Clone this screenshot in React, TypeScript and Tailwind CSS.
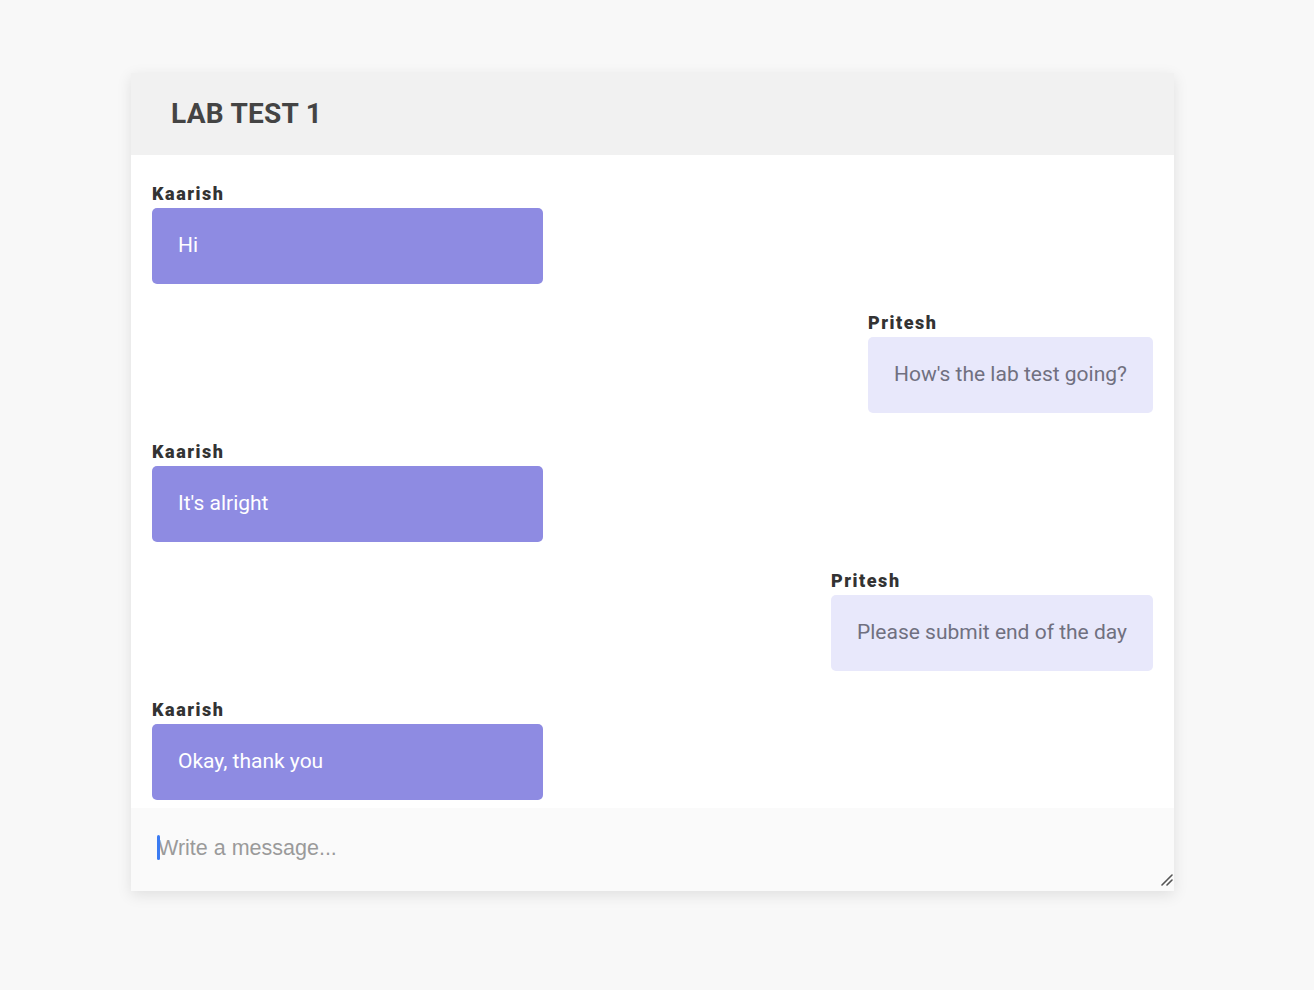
type Message = {
  author: string;
  text: string;
  mine: boolean;
};

const messages: Message[] = [
  { author: "Kaarish", text: "Hi", mine: true },
  { author: "Pritesh", text: "How's the lab test going?", mine: false },
  { author: "Kaarish", text: "It's alright", mine: true },
  { author: "Pritesh", text: "Please submit end of the day", mine: false },
  { author: "Kaarish", text: "Okay, thank you", mine: true }
];

function ChatBubble({ author, text, mine }: Message) {
  return (
    <div className={mine ? "flex justify-start" : "flex justify-end"}>
      <div className="flex flex-col items-start">
        <p className="mb-1 text-[18px] font-black leading-5 tracking-[0.085em] text-[#333]">{author}</p>
        <div
          className={
            mine
              ? "flex h-[76px] w-[391px] items-center rounded-[5px] bg-[#8e8be2] px-[26px] text-[21px] text-white"
              : "flex h-[76px] items-center rounded-[5px] bg-[#e8e8fb] px-[26px] text-[21px] text-[#707080]"
          }
        >
          {text}
        </div>
      </div>
    </div>
  );
}

export default function App() {
  return (
    <div className="min-h-[990px] bg-[#f8f8f8] pt-[73px] font-['Roboto',sans-serif]">
      <div className="ml-[131px] w-[1043px] bg-white shadow-[0_4px_14px_rgba(0,0,0,0.10)]">
        <header className="flex h-[82px] items-center bg-[#f1f1f1] px-10">
          <h1 className="text-[28px] font-bold tracking-[0.01em] text-[#444]">LAB TEST 1</h1>
        </header>

        <div className="flex h-[653px] flex-col gap-[29px] overflow-hidden px-[21px] pt-[29px]">
          {messages.map((m, i) => (
            <ChatBubble key={i} {...m} />
          ))}
        </div>

        <div className="relative h-[83px] bg-[#fafafa]">
          <span className="absolute left-[26px] top-[27px] h-[25px] w-[3px] rounded-sm bg-[#3b7bf2]" />
          <textarea
            placeholder="Write a message..."
            className="block h-full w-full resize-none bg-transparent px-[27px] pt-[28px] font-['Liberation_Sans',sans-serif] text-[21.5px] leading-6 text-[#333] outline-none placeholder:text-[#9a9a9a]"
          />
          <svg className="absolute bottom-[5px] right-[1px] h-[12px] w-[12px]" viewBox="0 0 12 12">
            <path d="M1 11 L11 1 M6 11 L11 6" stroke="#555" strokeWidth="1.6" strokeLinecap="round" />
          </svg>
        </div>
      </div>
    </div>
  );
}
